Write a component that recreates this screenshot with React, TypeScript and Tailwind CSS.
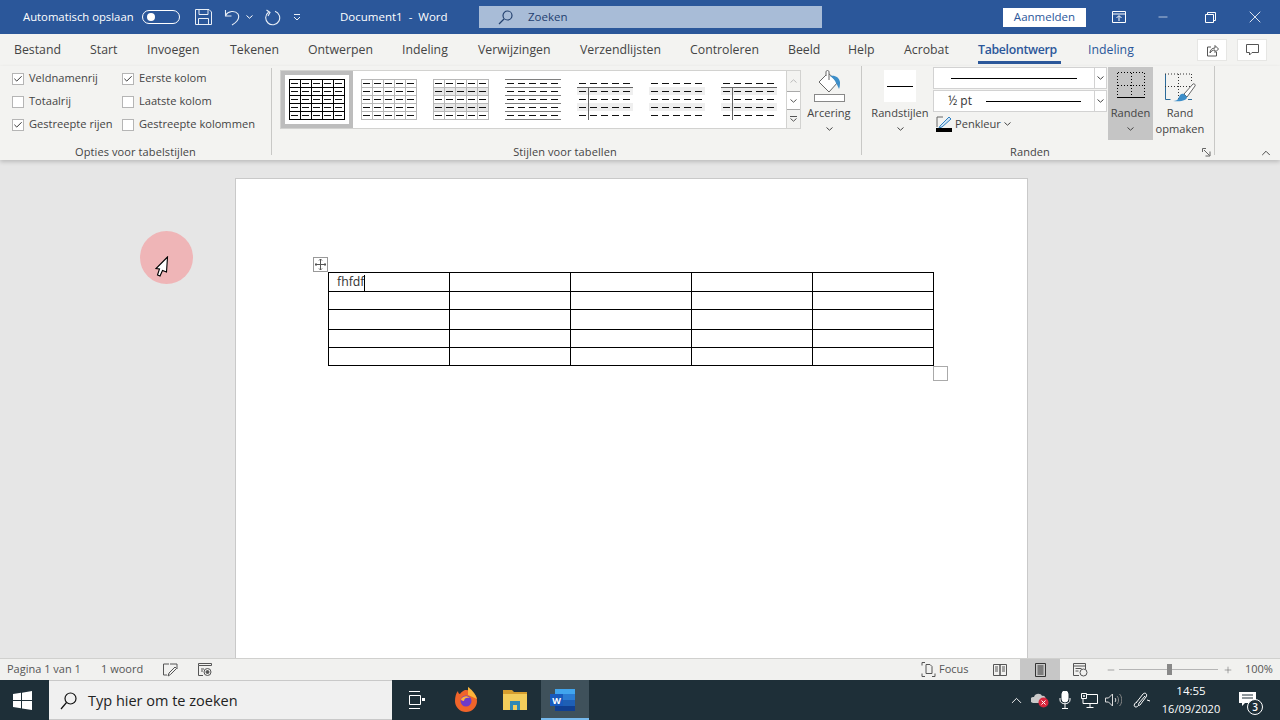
import { Check, ChevronUp, Minus, Plus, X } from 'lucide-react'

const font = { fontFamily: '"Open Sans", "Liberation Sans", sans-serif' }

const tabs = [
  { label: 'Bestand', width: 'w-[76px]' },
  { label: 'Start', width: 'w-[57px]' },
  { label: 'Invoegen', width: 'w-[83px]' },
  { label: 'Tekenen', width: 'w-[78px]' },
  { label: 'Ontwerpen', width: 'w-[94px]' },
  { label: 'Indeling', width: 'w-[76px]' },
  { label: 'Verwijzingen', width: 'w-[102px]' },
  { label: 'Verzendlijsten', width: 'w-[110px]' },
  { label: 'Controleren', width: 'w-[98px]' },
  { label: 'Beeld', width: 'w-[60px]' },
  { label: 'Help', width: 'w-[56px]' },
  { label: 'Acrobat', width: 'w-[74px]' },
]

const rowHeights = ['h-[19px]', 'h-[18px]', 'h-[20px]', 'h-[18px]', 'h-[18px]']

function Caret({ className = '' }: { className?: string }) {
  return (
    <svg width="7" height="4" viewBox="0 0 7 4" className={`shrink-0 ${className}`}>
      <path d="M.5.5 3.500 3.200 6.500.5" fill="none" stroke="currentColor" />
    </svg>
  )
}

function Option({ label, checked }: { label: string; checked?: boolean }) {
  return (
    <div className="flex h-[23px] items-center gap-[5px]">
      <span className="flex h-[12px] w-[12px] items-center justify-center border border-[#b5b5b5] bg-white">
        {checked && <Check size={10} strokeWidth={2.200} className="text-[#222]" />}
      </span>
      <span className="whitespace-nowrap">{label}</span>
    </div>
  )
}

// miniatuur van een tabelstijl in de galerij
function StyleThumb({ kind }: { kind: number }) {
  const xs = [0, 11, 22, 33, 44]
  const ys = [0, 8, 16, 24, 32]
  const grid = kind <= 2
  const line = kind === 0 ? '#000' : '#b8b8b8'
  return (
    <svg width="56" height="41" viewBox="0 0 56 41" shapeRendering="crispEdges">
      {kind === 2 && [8, 24].map((y) => <rect key={y} x="0" y={y} width="56" height="8" fill="#e8e8e8" />)}
      {kind >= 4 && [8, 24].map((y) => <rect key={y} x="0" y={y} width="56" height="8" fill="#efefef" />)}
      {grid && (
        <g stroke={line} fill="none">
          <rect x="0.5" y="0.5" width="55" height="40" />
          {[8, 16, 24, 32].map((y) => <path key={y} d={`M0 ${y + 0.5}H56`} />)}
          {[11, 22, 33, 44].map((x) => <path key={x} d={`M${x + 0.5} 0V41`} />)}
        </g>
      )}
      {kind === 3 && (
        <g stroke="#808080">
          {[0, 8, 16, 24, 32, 40].map((y) => <path key={y} d={`M0 ${y + 0.5}H56`} />)}
        </g>
      )}
      {(kind === 4 || kind === 6) && (
        <g stroke="#666">
          <path d="M0 8.500H56" />
          <path d="M11.500 8V41" />
        </g>
      )}
      <g stroke="#111">
        {ys.map((y) => xs.map((x) => <path key={`${x}-${y}`} d={`M${x + 2} ${y + 4.5}h7`} />))}
      </g>
    </svg>
  )
}

function BorderDropdown({ children }: { children: React.ReactNode }) {
  return (
    <div className="flex h-[22px] w-[174px] border border-[#d2d2d2] bg-white">
      <div className="flex min-w-0 flex-1 items-center">{children}</div>
      <div className="flex w-[12px] items-center justify-center border-l border-[#d2d2d2] text-[#444]">
        <Caret />
      </div>
    </div>
  )
}

function TitleBar() {
  return (
    <div className="flex h-[34px] shrink-0 items-center bg-[#2b579a] text-[11.500px] text-white">
      <span className="ml-[23px] w-[119px] text-[11.300px] whitespace-nowrap">Automatisch opslaan</span>
      <span className="flex h-[14px] w-[38px] items-center rounded-full border border-white pl-[4px]">
        <span className="h-[8px] w-[8px] rounded-full bg-white" />
      </span>
      <svg width="17" height="16" viewBox="0 0 17 16" className="ml-[15px]" fill="none" stroke="#e8eef6">
        <path d="M.5.500h13.500l2.500 2.500v12.500H.500zM4 .5v5h9v-5M3.500 15.500v-6h10v6" />
      </svg>
      <svg width="16" height="17" viewBox="0 0 16 17" className="ml-[12px]" fill="none" stroke="#e8eef6" strokeWidth="1.100">
        <path d="M1.500 1v6h6M1.500 6.500C4 2 11 1 14 5c2 4-1 8-6 11" />
      </svg>
      <Caret className="ml-[6px]" />
      <svg width="17" height="17" viewBox="0 0 17 17" className="ml-[11px]" fill="none" stroke="#e8eef6" strokeWidth="1.100">
        <path d="M11 2.200A7 7 0 1 1 4.500 3.200M2.500 1 6 3.500 4 7" />
      </svg>
      <svg width="8" height="7" viewBox="0 0 8 7" className="ml-[12px]" fill="none" stroke="#e8eef6">
        <path d="M1 .5h6M1 3l3 3 3-3" />
      </svg>
      <span className="ml-[39px] w-[139px] whitespace-pre">Document1  -  Word</span>
      <div className="flex h-[22px] w-[343px] items-center bg-[#a8bcd7] text-[#1f3f70]">
        <svg width="15" height="15" viewBox="0 0 15 15" className="ml-[19px]" fill="none" stroke="#24426f" strokeWidth="1.200">
          <circle cx="9.500" cy="5.500" r="4.500" />
          <path d="M6 9 1 14" />
        </svg>
        <span className="ml-[15px]">Zoeken</span>
      </div>
      <button className="ml-[181px] flex h-[19px] w-[83px] items-center justify-center bg-white text-[#2b579a]">Aanmelden</button>
      <svg width="14" height="12" viewBox="0 0 14 12" className="ml-[26px]" fill="none" stroke="#fff">
        <path d="M.5.500h13v11H.500zM.5 3h13M7 10V5M4.500 7 7 4.500 9.500 7" />
      </svg>
      <Minus size={14} strokeWidth={1.100} className="ml-[30px]" />
      <svg width="11" height="11" viewBox="0 0 11 11" className="ml-[35px]" fill="none" stroke="#fff">
        <path d="M.5 2.500h8v8h-8zM2.500 2.500v-2h8v8h-2" />
      </svg>
      <X size={20} strokeWidth={1} className="ml-[29px]" />
    </div>
  )
}

function TabBar() {
  return (
    <div className="flex h-[32px] shrink-0 items-center bg-[#f3f3f1] pl-[14px] text-[12.300px] text-[#444]">
      {tabs.map((tab) => (
        <span key={tab.label} className={tab.width}>{tab.label}</span>
      ))}
      <span className="relative w-[110px] font-semibold text-[#2b579a]">
        <span className="tracking-[-0.3px]">Tabelontwerp</span>
        <span className="absolute bottom-[-5px] left-0 h-[3px] w-[83px] bg-[#2b579a]" />
      </span>
      <span className="w-[109px] text-[#2b579a]">Indeling</span>
      <div className="flex h-[22px] w-[30px] items-center justify-center border border-[#e6e6e4] bg-white">
        <svg width="13" height="13" viewBox="0 0 13 13" fill="none" stroke="#555">
          <path d="M5 3H1.500v9h9V8M4 9c0-3 2-5 5-5V1.500l3.500 3.500L9 8.500V6C7 6 5 7 4 9z" />
        </svg>
      </div>
      <div className="ml-[10px] flex h-[22px] w-[30px] items-center justify-center border border-[#e6e6e4] bg-white">
        <svg width="13" height="12" viewBox="0 0 13 12" fill="none" stroke="#555">
          <path d="M.5.500h12v8H6L3.500 11V8.500h-3z" />
        </svg>
      </div>
    </div>
  )
}

function GroupLabel({ children, className }: { children: React.ReactNode; className: string }) {
  return <span className={`absolute bottom-[-5px] text-center text-[11px] leading-[16px] tracking-[0.1px] whitespace-nowrap ${className}`}>{children}</span>
}

function Ribbon() {
  return (
    <div className="relative z-10 flex h-[94px] shrink-0 bg-[#f3f3f1] text-[11.100px] text-[#444] shadow-[0_2px_4px_rgba(0,0,0,0.18)]">
      {/* Opties voor tabelstijlen */}
      <div className="relative my-[2px] flex h-[87px] w-[272px] border-r border-[#c8c8c6] pl-[12px]">
        <div className="mt-[-1px] w-[110px]">
          <Option label="Veldnamenrij" checked />
          <Option label="Totaalrij" />
          <Option label="Gestreepte rijen" checked />
        </div>
        <div className="mt-[-1px]">
          <Option label="Eerste kolom" checked />
          <Option label="Laatste kolom" />
          <Option label="Gestreepte kolommen" />
        </div>
        <GroupLabel className="left-0 w-[271px]">Opties voor tabelstijlen</GroupLabel>
      </div>

      {/* Stijlen voor tabellen */}
      <div className="relative flex h-[89px] w-[590px] border-r border-[#c8c8c6] pt-[4px] pl-[8px]">
        <div className="flex h-[59px] w-[521px] border border-[#d2d2d0] bg-white">
          {[0, 1, 2, 3, 4, 5, 6].map((kind) => (
            <div
              key={kind}
              className={`flex h-[57px] w-[72px] items-center justify-center ${kind === 0 ? 'border-4 border-[#bdbdbd]' : ''}`}
            >
              <StyleThumb kind={kind} />
            </div>
          ))}
          <div className="ml-auto flex w-[14px] flex-col border-l border-[#d2d2d0] bg-[#f3f3f1] text-[#555]">
            <div className="flex h-[20px] items-center justify-center text-[#bbb]"><Caret className="rotate-180" /></div>
            <div className="flex h-[19px] items-center justify-center border-y border-[#a9a9a9] bg-white"><Caret /></div>
            <div className="flex flex-1 flex-col items-center justify-center">
              <span className="mb-[1px] h-px w-[7px] bg-[#555]" />
              <Caret />
            </div>
          </div>
        </div>
        <div className="flex w-[56px] flex-col items-center">
          <svg width="33" height="32" viewBox="0 0 33 32" fill="none">
            <path d="M6 12 15 3l10 9-9 10z" stroke="#666" fill="#fff" />
            <path d="M13 6V1.800c0-1.700 3-1.700 3 0V10" stroke="#666" fill="#fff" />
            <path d="M17 6c5-1 9 1 10 6 0 2 0 5-1 7-1-2-2-5-3-6-1-3-3-5-6-7z" fill="#3d8ec9" />
            <rect x="1.500" y="24.500" width="30" height="7" stroke="#888" fill="#fff" />
          </svg>
          <span className="mt-[3px] leading-[16px]">Arcering</span>
          <Caret className="mt-[6px]" />
        </div>
        <GroupLabel className="left-0 w-[586px]">Stijlen voor tabellen</GroupLabel>
      </div>

      {/* Randen */}
      <div className="relative flex h-[89px] w-[353px] border-r border-[#c8c8c6]">
        <div className="flex w-[71px] flex-col items-center pt-[4px] pl-[5px]">
          <div className="flex h-[32px] w-[32px] items-center justify-center bg-white">
            <span className="h-px w-[26px] bg-black" />
          </div>
          <span className="mt-[3px] leading-[16px] whitespace-nowrap">Randstijlen</span>
          <Caret className="mt-[6px]" />
        </div>
        <div className="w-[174px] pt-px">
          <BorderDropdown><span className="ml-[17px] h-px w-[126px] bg-black" /></BorderDropdown>
          <div className="mt-px">
            <BorderDropdown>
              <span className="ml-[14px] w-[38px] text-[12px] text-[#333]">½ pt</span>
              <span className="h-px w-[95px] bg-black" />
            </BorderDropdown>
          </div>
          <div className="mt-[3px] flex h-[18px] items-center">
            <svg width="17" height="16" viewBox="0 0 17 16" className="ml-[3px]" fill="none">
              <path d="M1 1h6M1 1v10" stroke="#666" />
              <path d="M4 10 13 1l2 2-9 8-3 1z" fill="#cfe4f5" stroke="#2f80c2" />
              <rect x="0" y="12" width="16" height="4" fill="#000" />
            </svg>
            <span className="ml-[2px]">Penkleur</span>
            <Caret className="ml-[3px]" />
          </div>
        </div>
        <div className="mt-px ml-px flex h-[73px] w-[45px] flex-col items-center bg-[#c5c5c5] pt-[5px]">
          <svg width="28" height="26" viewBox="0 0 28 26" fill="none" shapeRendering="crispEdges">
            <path d="M.5 .5h27M.5.5v25M27.500.5v25M14 .5v25M.5 13h27" stroke="#000" strokeDasharray="1 2" />
            <path d="M0 25.500h28" stroke="#000" />
          </svg>
          <span className="mt-[7px] leading-[16px]">Randen</span>
          <Caret className="mt-[6px]" />
        </div>
        <div className="flex w-[54px] flex-col items-center pt-[7px]">
          <svg width="33" height="29" viewBox="0 0 33 29" fill="none">
            <path d="M1.500 1v25.500h5M24 26.500h4" stroke="#2b6a99" />
            <path d="M1 1h27M14.500 1v25M1 13.500h27M27.500 1v9" stroke="#333" strokeDasharray="1 2" />
            <path d="M20 21 29 11c1-1 3 1 2 2L23 24z" fill="#fff" stroke="#666" />
            <path d="M9 28c3 0 5-1 6-4s3-4 5-3l3 3c0 3-5 5-14 4z" fill="#3d8ec9" />
          </svg>
          <span className="mt-[3px] text-center leading-[16px]">Rand<br />opmaken</span>
        </div>
        <GroupLabel className="left-0 w-[336px]">Randen</GroupLabel>
        <svg width="9" height="9" viewBox="0 0 9 9" fill="none" stroke="#666" className="absolute right-[3px] bottom-[-2px]">
          <path d="M.5 4V.5H4M2 2l5.500 5.500M8 3.500V8H3.500" />
        </svg>
      </div>
      <ChevronUp size={14} strokeWidth={1.500} className="absolute right-[7px] bottom-[0px] text-[#333]" />
    </div>
  )
}

function Document() {
  return (
    <div className="relative min-h-0 flex-1 overflow-hidden bg-[#e6e6e6] pt-[18px] pl-[235px]">
      <div className="h-[500px] w-[793px] border border-[#c9c9c9] bg-white pt-[93px] pl-[92px]">
        <div className="relative w-[605px]">
          <span className="absolute top-[-15px] left-[-15px] flex h-[15px] w-[15px] items-center justify-center border border-[#999] bg-white">
            <svg width="11" height="11" viewBox="0 0 11 11" fill="none" stroke="#555">
              <path d="M5.500 0v11M0 5.500h11M4 1.500 5.500 0 7 1.500M4 9.500 5.500 11 7 9.500M1.500 4 0 5.500 1.500 7M9.500 4 11 5.500 9.500 7" />
            </svg>
          </span>
          <table className="w-[605.500px] table-fixed border-collapse text-[12.300px] text-[#333]">
            <tbody>
              {rowHeights.map((height, row) => (
                <tr key={row} className={height}>
                  {[0, 1, 2, 3, 4].map((col) => (
                    <td key={col} className="border border-black p-0 pt-px pl-[8px] leading-none">
                      {row === 0 && col === 0 && (
                        <span className="inline-flex items-center">fhfdf<span className="h-[16px] w-px bg-black" /></span>
                      )}
                    </td>
                  ))}
                </tr>
              ))}
            </tbody>
          </table>
          <span className="absolute right-[-15px] bottom-[-15px] h-[15px] w-[15px] border border-[#aaa] bg-white" />
        </div>
      </div>
      {/* muisaanwijzer van de schermopname */}
      <div className="absolute top-[71px] left-[140px] h-[53px] w-[53px] rounded-full bg-[#efb5b7]">
        <svg width="14" height="21" viewBox="0 0 14 21" className="absolute top-[25px] left-[15px]">
          <path d="M12.500 1 1 12.500l3.500 .5L2.500 19l2.500 1 2.500-5.500 4 1.500z" fill="#fff" stroke="#000" strokeWidth="1.100" />
        </svg>
      </div>
    </div>
  )
}

function StatusBar() {
  return (
    <div className="flex h-[22px] shrink-0 items-center border-t border-[#d0d0ce] bg-[#f1f1ef] text-[11px] text-[#555]">
      <span className="ml-[7px] w-[94px] shrink-0">Pagina 1 van 1</span>
      <span className="w-[62px] shrink-0">1 woord</span>
      <svg width="15" height="14" viewBox="0 0 15 14" className="shrink-0" fill="none" stroke="#555">
        <path d="M6 1H.5v11H4M7 1h7v5M5 13l1-3 6-6 1.500 1.500-6 6z" />
      </svg>
      <svg width="14" height="14" viewBox="0 0 14 14" className="ml-[20px] shrink-0" fill="none" stroke="#555">
        <path d="M.5.500h13v2H.5zM.5 2.500v10H5M3 6h3M3 8h2" />
        <circle cx="9.500" cy="9" r="3.500" />
        <circle cx="9.500" cy="9" r="1.500" fill="#555" />
      </svg>
      <svg width="15" height="15" viewBox="0 0 15 15" className="ml-[709px] shrink-0" fill="none" stroke="#555">
        <path d="M1 3.500v-3h3M1 11.500v3h3M14 11.500v3h-3M5 11.500v-9h4l2 2v7z" />
      </svg>
      <span className="ml-[3px] w-[54px] shrink-0">Focus</span>
      <svg width="14" height="12" viewBox="0 0 14 12" className="shrink-0" fill="none" stroke="#555">
        <path d="M.5.500H7v11H.5zM7 .5h6.500v11H7zM2 3h3M2 5h3M2 7h3M9 3h3M9 5h3M9 7h3" />
      </svg>
      <div className="ml-[13px] flex h-[21px] w-[40px] shrink-0 items-center justify-center bg-[#c6c6c6]">
        <svg width="11" height="14" viewBox="0 0 11 14" fill="none" stroke="#333">
          <path d="M.5.500h10v13H.500zM2.500 3h6M2.500 5h6M2.500 7h6M2.500 9h6M2.500 11h6" />
        </svg>
      </div>
      <svg width="15" height="14" viewBox="0 0 15 14" className="ml-[13px] shrink-0" fill="none" stroke="#555">
        <path d="M6 12.500H.5V.5h12V6M.5 3h12M2.500 5.500h6M2.500 8h3" />
        <circle cx="10.500" cy="9.500" r="3.500" />
      </svg>
      <Minus size={10} strokeWidth={1.200} className="ml-[18px] shrink-0" />
      <div className="relative ml-[3px] h-px w-[99px] shrink-0 bg-[#b5b5b5]">
        <span className="absolute top-[-5px] left-[48px] h-[11px] w-[5px] bg-[#888]" />
      </div>
      <Plus size={10} strokeWidth={1.200} className="ml-[5px] shrink-0" />
      <span className="ml-[12px] shrink-0">100%</span>
    </div>
  )
}

function Taskbar() {
  return (
    <div className="flex h-[40px] shrink-0 items-center bg-[#1e2f38] text-white">
      <svg width="19" height="19" viewBox="0 0 19 19" className="ml-[13px] shrink-0" fill="#fff">
        <path d="M0 3 8 1.800V9H0zM9 1.700 19 0v9H9zM0 10h8v7.200L0 16zM9 10h10v9L9 17.400z" />
      </svg>
      <div className="ml-[17px] flex h-[40px] w-[343px] shrink-0 items-center border-y border-[#c9c9c9] bg-[#f0f0f0] pt-px text-[14.500px] text-[#222]">
        <svg width="17" height="18" viewBox="0 0 17 18" className="ml-[11px]" fill="none" stroke="#111" strokeWidth="1.200">
          <circle cx="10.500" cy="6.500" r="5.500" />
          <path d="M6.500 10.500 1 17" />
        </svg>
        <span className="ml-[11px]">Typ hier om te zoeken</span>
      </div>
      <svg width="17" height="18" viewBox="0 0 17 18" className="ml-[16px] shrink-0" fill="none" stroke="#fff">
        <path d="M1 .5h11M1 17.500h11M1.500 4.500h11v9h-11z" />
        <rect x="14" y="7" width="3" height="3" fill="#fff" stroke="none" />
      </svg>
      <svg width="24" height="26" viewBox="0 0 24 26" className="ml-[29px] shrink-0">
        <path d="M12 3c6 0 11 4 11 11a11 11 0 0 1-22 0C1 10 2 6 4 4c0 2 1 3 2 3 1-2 3-3 5-4z" fill="#f0642a" />
        <path d="M14 0c3 2 7 6 9 12l-9-4z" fill="#fbb43a" />
        <circle cx="12" cy="14" r="5.500" fill="#6d3bc9" />
        <path d="M7 12c2-3 6-4 9-1-3-1-6 0-6 3-2 0-3-1-3-2z" fill="#ffb13b" />
      </svg>
      <svg width="24" height="20" viewBox="0 0 24 20" className="ml-[25px] shrink-0">
        <path d="M0 0h9l2 2h13v3H0z" fill="#d69e2e" />
        <path d="M0 4h24v16H0z" fill="#f3cd5b" />
        <path d="M7 11h10v9h-3v-5h-4v5H7z" fill="#2f88b5" />
      </svg>
      <div className="relative ml-[14px] flex h-[40px] w-[48px] shrink-0 items-center justify-center bg-[#3f515b]">
        <div className="relative h-[22px] w-[20px] bg-[#1e5fb5]">
          <span className="absolute top-0 right-0 h-[5px] w-full bg-[#41a5ee]" />
          <span className="absolute top-[5px] right-0 h-[6px] w-full bg-[#2b7cd3]" />
          <span className="absolute bottom-0 h-[5px] w-full bg-[#103f91]" />
          <span className="absolute top-[5px] left-[-5px] flex h-[12px] w-[13px] items-center justify-center bg-[#185abd] text-[9px] leading-none font-bold">W</span>
        </div>
        <span className="absolute bottom-0 left-0 h-[2px] w-full bg-[#76b9ed]" />
      </div>
      <ChevronUp size={17} strokeWidth={1.300} className="ml-[419px] shrink-0" />
      <svg width="18" height="16" viewBox="0 0 18 16" className="ml-[6px] shrink-0">
        <path d="M2 11a3 3 0 0 1 1-6c1-4 7-4 8-1 3-1 5 3 3 7z" fill="#c9c9c9" />
        <circle cx="12.500" cy="10.500" r="5" fill="#d7263d" />
        <path d="M10.500 8.500l4 4m0-4-4 4" stroke="#fff" />
      </svg>
      <svg width="12" height="18" viewBox="0 0 12 18" className="ml-[10px] shrink-0" fill="none" stroke="#fff">
        <rect x="3" y="0" width="6" height="11" rx="3" fill="#fff" />
        <path d="M1 7v2c0 5 10 5 10 0V7M6 13v4M3 17.500h6" />
      </svg>
      <svg width="17" height="15" viewBox="0 0 17 15" className="ml-[10px] shrink-0" fill="none" stroke="#fff">
        <path d="M5.500 1.500h11v9H2V6M9 10.500v3.500M5.500 14.500h7M.5.500h5v5h-5zM2.500 2.500h1v1h-1z" />
      </svg>
      <svg width="17" height="14" viewBox="0 0 17 14" className="ml-[7px] shrink-0" fill="none" stroke="#ddd">
        <path d="M.5 5h3L7.500 1v12l-4-4h-3zM10 5c1 1 1 3 0 4" />
        <path d="M12 3c2 2 2 6 0 8M14.500 1c3 3 3 9 0 12" stroke="#888" />
      </svg>
      <svg width="17" height="17" viewBox="0 0 17 17" className="ml-[11px] shrink-0" fill="none" stroke="#fff">
        <path d="M3 11 10 2c2-2 5 0 3 3L7 13c-1 1-2 0-1-2l6-7M4 10c-3 1-4 5-1 5 1 0 2-1 3-2M14 8l3 1" />
      </svg>
      <div className="ml-[3px] w-[76px] shrink-0 text-center text-[11px] leading-[18px]">
        <div className="text-[11.500px]">14:55</div>
        <div>16/09/2020</div>
      </div>
      <div className="relative ml-[10px] h-[18px] w-[17px] shrink-0">
        <svg width="17" height="14" viewBox="0 0 17 14" fill="#fff" className="mt-[1px]">
          <path d="M0 0h17v11H6l-3 3v-3H0z" />
          <path d="M3 3h11M3 6h11" stroke="#1e2f38" />
        </svg>
        <span className="absolute top-[8px] left-[8px] flex h-[16px] w-[16px] items-center justify-center rounded-full border border-white bg-[#1e2f38] text-[10px] font-semibold">3</span>
      </div>
    </div>
  )
}

export default function App() {
  return (
    <div className="flex h-[720px] w-[1280px] flex-col overflow-hidden" style={font}>
      <TitleBar />
      <TabBar />
      <Ribbon />
      <Document />
      <StatusBar />
      <Taskbar />
    </div>
  )
}
